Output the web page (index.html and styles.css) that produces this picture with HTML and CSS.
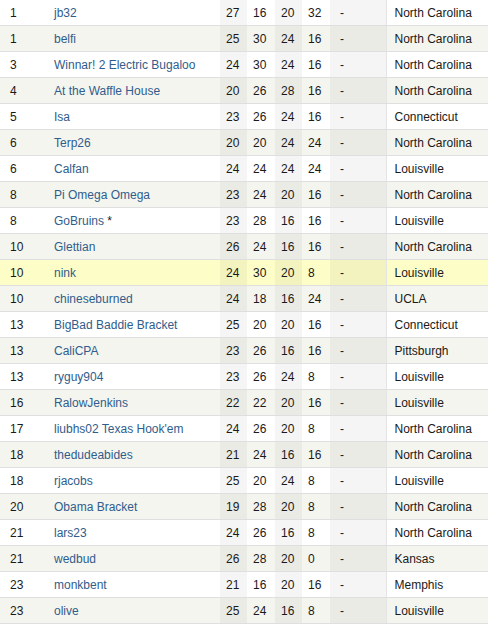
FILE: index.html
```html
<!DOCTYPE html>
<html>
<head>
<meta charset="utf-8">
<link rel="stylesheet" href="styles.css">
</head>
<body>
<table class="standings">
<colgroup>
<col class="c-rank"><col class="c-name"><col class="c-s1"><col class="c-s2"><col class="c-s3"><col class="c-s4"><col class="c-dash"><col class="c-state">
</colgroup>
<tbody>
<tr><td>1</td><td><a href="#">jb32</a></td><td class="sh">27</td><td>16</td><td class="sh">20</td><td>32</td><td class="sh">-</td><td class="st">North Carolina</td></tr>
<tr class="alt"><td>1</td><td><a href="#">belfi</a></td><td class="sh">25</td><td>30</td><td class="sh">24</td><td>16</td><td class="sh">-</td><td class="st">North Carolina</td></tr>
<tr><td>3</td><td><a href="#">Winnar! 2 Electric Bugaloo</a></td><td class="sh">24</td><td>30</td><td class="sh">24</td><td>16</td><td class="sh">-</td><td class="st">North Carolina</td></tr>
<tr class="alt"><td>4</td><td><a href="#">At the Waffle House</a></td><td class="sh">20</td><td>26</td><td class="sh">28</td><td>16</td><td class="sh">-</td><td class="st">North Carolina</td></tr>
<tr><td>5</td><td><a href="#">Isa</a></td><td class="sh">23</td><td>26</td><td class="sh">24</td><td>16</td><td class="sh">-</td><td class="st">Connecticut</td></tr>
<tr class="alt"><td>6</td><td><a href="#">Terp26</a></td><td class="sh">20</td><td>20</td><td class="sh">24</td><td>24</td><td class="sh">-</td><td class="st">North Carolina</td></tr>
<tr><td>6</td><td><a href="#">Calfan</a></td><td class="sh">24</td><td>24</td><td class="sh">24</td><td>24</td><td class="sh">-</td><td class="st">Louisville</td></tr>
<tr class="alt"><td>8</td><td><a href="#">Pi Omega Omega</a></td><td class="sh">23</td><td>24</td><td class="sh">20</td><td>16</td><td class="sh">-</td><td class="st">North Carolina</td></tr>
<tr><td>8</td><td><a href="#">GoBruins</a> *</td><td class="sh">23</td><td>28</td><td class="sh">16</td><td>16</td><td class="sh">-</td><td class="st">Louisville</td></tr>
<tr class="alt"><td>10</td><td><a href="#">Glettian</a></td><td class="sh">26</td><td>24</td><td class="sh">16</td><td>16</td><td class="sh">-</td><td class="st">North Carolina</td></tr>
<tr class="hl"><td>10</td><td><a href="#">nink</a></td><td class="sh">24</td><td>30</td><td class="sh">20</td><td>8</td><td class="sh">-</td><td class="st">Louisville</td></tr>
<tr class="alt"><td>10</td><td><a href="#">chineseburned</a></td><td class="sh">24</td><td>18</td><td class="sh">16</td><td>24</td><td class="sh">-</td><td class="st">UCLA</td></tr>
<tr><td>13</td><td><a href="#">BigBad Baddie Bracket</a></td><td class="sh">25</td><td>20</td><td class="sh">20</td><td>16</td><td class="sh">-</td><td class="st">Connecticut</td></tr>
<tr class="alt"><td>13</td><td><a href="#">CaliCPA</a></td><td class="sh">23</td><td>26</td><td class="sh">16</td><td>16</td><td class="sh">-</td><td class="st">Pittsburgh</td></tr>
<tr><td>13</td><td><a href="#">ryguy904</a></td><td class="sh">23</td><td>26</td><td class="sh">24</td><td>8</td><td class="sh">-</td><td class="st">Louisville</td></tr>
<tr class="alt"><td>16</td><td><a href="#">RalowJenkins</a></td><td class="sh">22</td><td>22</td><td class="sh">20</td><td>16</td><td class="sh">-</td><td class="st">Louisville</td></tr>
<tr><td>17</td><td><a href="#">liubhs02 Texas Hook'em</a></td><td class="sh">24</td><td>26</td><td class="sh">20</td><td>8</td><td class="sh">-</td><td class="st">North Carolina</td></tr>
<tr class="alt"><td>18</td><td><a href="#">thedudeabides</a></td><td class="sh">21</td><td>24</td><td class="sh">16</td><td>16</td><td class="sh">-</td><td class="st">North Carolina</td></tr>
<tr><td>18</td><td><a href="#">rjacobs</a></td><td class="sh">25</td><td>20</td><td class="sh">24</td><td>8</td><td class="sh">-</td><td class="st">Louisville</td></tr>
<tr class="alt"><td>20</td><td><a href="#">Obama Bracket</a></td><td class="sh">19</td><td>28</td><td class="sh">20</td><td>8</td><td class="sh">-</td><td class="st">North Carolina</td></tr>
<tr><td>21</td><td><a href="#">lars23</a></td><td class="sh">24</td><td>26</td><td class="sh">16</td><td>8</td><td class="sh">-</td><td class="st">North Carolina</td></tr>
<tr class="alt"><td>21</td><td><a href="#">wedbud</a></td><td class="sh">26</td><td>28</td><td class="sh">20</td><td>0</td><td class="sh">-</td><td class="st">Kansas</td></tr>
<tr><td>23</td><td><a href="#">monkbent</a></td><td class="sh">21</td><td>16</td><td class="sh">20</td><td>16</td><td class="sh">-</td><td class="st">Memphis</td></tr>
<tr class="alt"><td>23</td><td><a href="#">olive</a></td><td class="sh">25</td><td>24</td><td class="sh">16</td><td>8</td><td class="sh">-</td><td class="st">Louisville</td></tr>
</tbody>
</table>
</body>
</html>
```
FILE: styles.css
```css
html, body {
  margin: 0;
  padding: 0;
  background: #ffffff;
}
.standings {
  width: 488px;
  table-layout: fixed;
  border-collapse: collapse;
  font-family: "Liberation Sans", Arial, sans-serif;
  font-size: 12px;
  color: #1a1a1a;
}
.c-rank { width: 46px; }
.c-name { width: 174px; }
.c-s1 { width: 27px; }
.c-s2 { width: 28px; }
.c-s3 { width: 27px; }
.c-s4 { width: 28px; }
.c-dash { width: 56px; }
.c-state { width: 102px; }
.standings td {
  height: 24px;
  padding: 1px 0 0 6px;
  border-bottom: 1px solid #dfdfdf;
  white-space: nowrap;
  overflow: hidden;
  vertical-align: middle;
  line-height: 14px;
}
.standings td:first-child { padding-left: 10px; }
.standings td:nth-child(2) { padding-left: 8px; }
.standings td:nth-child(7) { padding-left: 10px; }
.standings tr { background: #ffffff; }
.standings tr.alt { background: #f5f5ef; }
.standings tr.hl { background: #fdfdc8; }
.standings td.sh { background: rgba(0, 0, 0, 0.038); }
.standings td.st {
  padding-left: 8px;
  border-left: 1px solid #e4e4e4;
}
.standings a {
  color: #2f5d8c;
  text-decoration: none;
}
```
